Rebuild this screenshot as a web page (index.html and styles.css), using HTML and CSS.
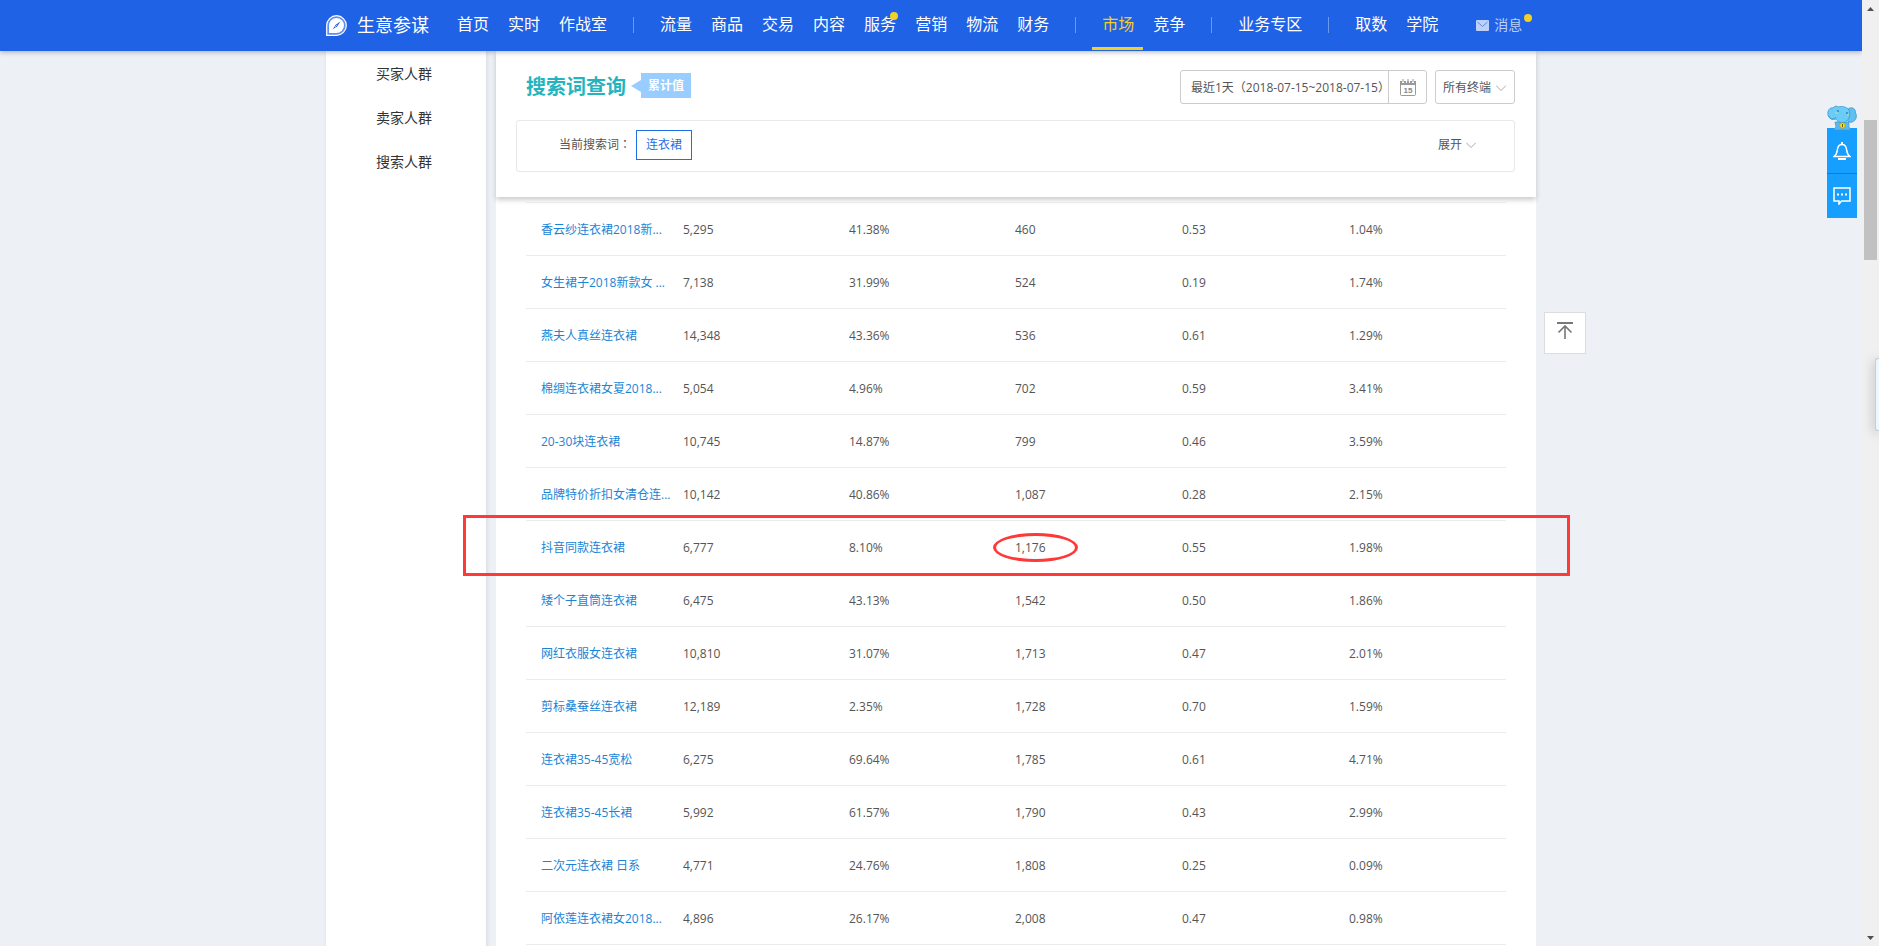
FILE: index.html
```html
<!DOCTYPE html>
<html lang="zh-CN">
<head>
<meta charset="utf-8">
<title>生意参谋 - 搜索词查询</title>
<link rel="stylesheet" href="styles.css">
</head>
<body>
<div class="viewport">
  <header class="topbar">
    <div class="container topbar-inner">
      <a class="brand" href="#">
        <svg class="brand-logo" viewBox="0 0 21 21" aria-hidden="true">
          <path d="M.700 20.300V10.500A9.800 9.800 0 1 1 10.500 20.300Z" fill="#5f8fee" stroke="#fff" stroke-width="1.200"/>
          <path d="M3 18V10.500a7.500 7.500 0 1 1 7.500 7.500Z" fill="#fff"/>
          <path d="M14.500 6.500L11.300 11.300L6.500 14.500L9.700 9.700Z" fill="#2062e6"/>
          <path d="M11 10L9 12" stroke="#fff" stroke-width=".6"/>
        </svg>
        <span>生意参谋</span>
      </a>
      <nav class="nav">
        <a href="#">首页</a><a href="#">实时</a><a href="#">作战室</a>
        <i class="sep"></i>
        <a href="#">流量</a><a href="#">商品</a><a href="#">交易</a><a href="#">内容</a><a href="#">服务<b class="dot"></b></a><a href="#">营销</a><a href="#">物流</a><a href="#">财务</a>
        <i class="sep"></i>
        <a class="active" href="#">市场</a><a href="#">竞争</a>
        <i class="sep"></i>
        <a href="#">业务专区</a>
        <i class="sep"></i>
        <a href="#">取数</a><a href="#">学院</a>
      </nav>
      <a class="message" href="#">
        <svg viewBox="0 0 13 11" aria-hidden="true"><rect width="13" height="11" rx="1" fill="#bcd0f8"/><path d="M1.500 2L6.500 6.500L11.500 2" fill="none" stroke="#5a8bee"/></svg>
        消息<b class="dot"></b>
      </a>
    </div>
  </header>

  <div class="container body">
    <aside class="sidebar">
      <a href="#">买家人群</a>
      <a href="#">卖家人群</a>
      <a href="#">搜索人群</a>
    </aside>

    <main class="main">
      <section class="panel">
        <div class="panel-head">
          <h1>搜索词查询</h1>
          <span class="badge">累计值</span>
          <div class="filters">
            <div class="date">
              <input type="text" readonly aria-label="日期范围" lang="zh-TW" value="最近1天（2018-07-15~2018-07-15）">
              <button type="button" aria-label="选择日期">
                <svg viewBox="0 0 16 17" aria-hidden="true">
                  <path d="M.500 4V15.500Q.500 16.500 1.500 16.500H14.500Q15.500 16.500 15.500 15.500V4" fill="none" stroke="#999"/>
                  <path d="M0 2H2V4H4V2H6V4H7V2H9V4H10V2H12V4H14V2H16V6H0Z" fill="#999"/>
                  <path d="M3 0V3M8 0V3M13 0V3" stroke="#999"/>
                  <text x="8" y="14" text-anchor="middle" class="cal-day">15</text>
                </svg>
              </button>
            </div>
            <div class="terminal">
              <select aria-label="终端"><option>所有终端</option></select>
              <svg class="chevron" viewBox="0 0 10 6" aria-hidden="true"><path d="M0 .500L5 5.500L10 .500"/></svg>
            </div>
          </div>
        </div>
        <div class="query">
          <span>当前搜索词<span class="colon" lang="zh-TW">：</span></span>
          <button type="button" class="term">连衣裙</button>
          <button type="button" class="expand">展开 <svg class="chevron" viewBox="0 0 10 6" aria-hidden="true"><path d="M0 .500L5 5.500L10 .500"/></svg></button>
        </div>
      </section>

      <table class="words">
        <colgroup><col class="c-name"><col class="c-pop"><col class="c-pop"><col class="c-num"><col class="c-num"><col></colgroup>
        <tbody>
          <tr><td><a href="#">香云纱连衣裙2018新...</a></td><td>5,295</td><td>41.38%</td><td>460</td><td>0.53</td><td>1.04%</td></tr>
          <tr><td><a href="#">女生裙子2018新款女 ...</a></td><td>7,138</td><td>31.99%</td><td>524</td><td>0.19</td><td>1.74%</td></tr>
          <tr><td><a href="#">燕夫人真丝连衣裙</a></td><td>14,348</td><td>43.36%</td><td>536</td><td>0.61</td><td>1.29%</td></tr>
          <tr><td><a href="#">棉绸连衣裙女夏2018...</a></td><td>5,054</td><td>4.96%</td><td>702</td><td>0.59</td><td>3.41%</td></tr>
          <tr><td><a href="#">20-30块连衣裙</a></td><td>10,745</td><td>14.87%</td><td>799</td><td>0.46</td><td>3.59%</td></tr>
          <tr><td><a href="#">品牌特价折扣女清仓连...</a></td><td>10,142</td><td>40.86%</td><td>1,087</td><td>0.28</td><td>2.15%</td></tr>
          <tr class="marked"><td><a href="#">抖音同款连衣裙</a></td><td>6,777</td><td>8.10%</td><td><span class="circled">1,176</span></td><td>0.55</td><td>1.98%</td></tr>
          <tr><td><a href="#">矮个子直筒连衣裙</a></td><td>6,475</td><td>43.13%</td><td>1,542</td><td>0.50</td><td>1.86%</td></tr>
          <tr><td><a href="#">网红衣服女连衣裙</a></td><td>10,810</td><td>31.07%</td><td>1,713</td><td>0.47</td><td>2.01%</td></tr>
          <tr><td><a href="#">剪标桑蚕丝连衣裙</a></td><td>12,189</td><td>2.35%</td><td>1,728</td><td>0.70</td><td>1.59%</td></tr>
          <tr><td><a href="#">连衣裙35-45宽松</a></td><td>6,275</td><td>69.64%</td><td>1,785</td><td>0.61</td><td>4.71%</td></tr>
          <tr><td><a href="#">连衣裙35-45长裙</a></td><td>5,992</td><td>61.57%</td><td>1,790</td><td>0.43</td><td>2.99%</td></tr>
          <tr><td><a href="#">二次元连衣裙 日系</a></td><td>4,771</td><td>24.76%</td><td>1,808</td><td>0.25</td><td>0.09%</td></tr>
          <tr><td><a href="#">阿依莲连衣裙女2018...</a></td><td>4,896</td><td>26.17%</td><td>2,008</td><td>0.47</td><td>0.98%</td></tr>
        </tbody>
      </table>

      <button type="button" class="to-top" aria-label="返回顶部">
        <svg viewBox="0 0 16 17" aria-hidden="true"><path d="M0 1H16" stroke-width="2"/><path d="M8 17V4M1.500 10.500L8 4L14.500 10.500" stroke-width="1.600"/></svg>
      </button>
    </main>
  </div>

  <div class="helper">
    <svg class="elephant" viewBox="0 0 30 26" aria-hidden="true">
      <path d="M8 17H22V22L24 25H6L9 22Z" fill="#5bb8ec" stroke="#3a97cd" stroke-width=".7"/>
      <path d="M21 4C25 1 29 4 28.500 8C30.500 11 29 16 25 17C22 18 20 16 20 13Z" fill="#5fc0f2" stroke="#3a97cd" stroke-width=".8"/>
      <path d="M6 3C8 .500 10 .800 11 2C15 .800 20 2 22 5C24 10 22 16 17 17.500C12 18 10 15.500 9 14C6 15 2 14 1 10C0 6 3 2 6 3Z" fill="#6bcbf9" stroke="#3a97cd" stroke-width=".8"/>
      <path d="M2 11C3 15 7 15 9 12" fill="none" stroke="#3a97cd"/>
      <path d="M11 5V7M20 7V9" stroke="#245f8d"/>
      <path d="M8 8H11M20 10H22" stroke="#d7dd62"/>
      <circle cx="15.500" cy="20.500" r="2.800" fill="#f5d929" stroke="#a79a22" stroke-width=".7"/>
      <path d="M15.500 19V22" stroke="#665c10"/>
    </svg>
    <button type="button" aria-label="提醒">
      <svg viewBox="0 0 18 18" aria-hidden="true"><path d="M1 14.500C4 12.500 4 10 4.500 7C5 4 6.500 2.500 9 2.500S13 4 13.500 7C14 10 14 12.500 17 14.500Z" fill="none" stroke="#fff" stroke-width="1.500"/><path d="M9 0V3M5 17H13" stroke="#fff" stroke-width="2"/></svg>
    </button>
    <button type="button" aria-label="消息">
      <svg viewBox="0 0 18 18" aria-hidden="true"><path d="M1 1H17V14H8.500L6 17V14H1Z" fill="none" stroke="#fff" stroke-width="1.500"/><path d="M4 7.500H6M8 7.500H10M12 7.500H14" stroke="#fff" stroke-width="2"/></svg>
    </button>
  </div>
</div>

<div class="scrollbar" aria-hidden="true">
  <svg class="arrow" viewBox="0 0 7 4"><path d="M0 4L3.500 0L7 4Z"/></svg>
  <div class="thumb"></div>
  <svg class="arrow" viewBox="0 0 7 4"><path d="M0 0L3.500 4L7 0Z"/></svg>
</div>
<div class="edge-tab"></div>
</body>
</html>
```

FILE: styles.css
```css
* { box-sizing: border-box; }

body {
  margin: 0;
  display: flex;
  height: 100vh;
  overflow: hidden;
  background: #edf1f6;
  color: #555;
  font: 12px/18px "Open Sans", "Noto Sans CJK SC", sans-serif;
}

a { color: inherit; text-decoration: none; }
button, input, select { margin: 0; padding: 0; border: 0; background: none; color: inherit; font: inherit; }

.viewport { flex: 1; min-width: 0; position: relative; overflow: hidden; }
.container { width: 100%; max-width: 1210px; margin: 0 auto; }

/* Top bar */
.topbar {
  position: relative;
  z-index: 3;
  background: #2062e6;
  color: #fff;
  box-shadow: 0 1px 5px rgba(0, 0, 0, .3);
}
.topbar-inner { display: flex; align-items: center; height: 51px; padding-bottom: 1px; white-space: nowrap; }
.brand { display: flex; align-items: center; gap: 10px; margin-right: 18px; font-size: 18px; line-height: 24px; }
.brand-logo { width: 21px; height: 21px; }
.nav { display: flex; align-items: center; font-size: 16px; line-height: 48px; }
.nav a { position: relative; height: 50px; padding: 0 9px 0 10px; }
.nav .active { color: #f3d022; border-bottom: 3px solid #f3d022; }
.sep { width: 1px; height: 16px; margin: 0 16px 0 17px; background: rgba(255, 255, 255, .35); }
.dot { position: absolute; width: 8px; height: 8px; border-radius: 50%; background: #f3d022; }
.nav .dot { top: 12px; right: 7px; }
.message { position: relative; display: flex; align-items: center; gap: 5px; margin-left: 29px; color: #bcd0f8; font-size: 14px; }
.message svg { width: 13px; height: 11px; }
.message .dot { top: -2px; right: -5px; }

/* Columns */
.body { display: flex; gap: 10px; align-items: stretch; }
.sidebar {
  flex: 0 0 160px;
  min-height: 100vh;
  padding-top: 1px;
  background: #fff;
  box-shadow: 1px 0 4px rgba(0, 0, 0, .1);
  color: #333;
  font-size: 14px;
}
.sidebar a { display: block; padding-left: 50px; line-height: 44px; }
.main { position: relative; flex: 1; min-width: 0; min-height: 100vh; background: #fff; }

/* Query panel */
.panel { padding: 19px 21px 25px 20px; box-shadow: 0 3px 5px rgba(0, 0, 0, .2); }
.panel-head { display: flex; align-items: center; padding-left: 10px; }
.panel-head h1 { margin: 0; color: #23b5bf; font-size: 20px; line-height: 34px; }
.badge { position: relative; margin: 0 0 3px 15px; padding: 0 7px; background: #9cf; color: #fff; font-weight: bold; line-height: 25px; }
.badge::before {
  content: "";
  position: absolute;
  top: 7px;
  left: -10px;
  border: solid transparent;
  border-width: 6px 10px 6px 0;
  border-right-color: #9cf;
}
.filters { display: flex; gap: 8px; margin-left: auto; }
.date, .terminal { display: flex; height: 34px; border: 1px solid #ccc; border-radius: 3px; }
.date input { width: 207px; padding: 1px 0 0 10px; font-family: "Open Sans", "Noto Sans CJK TC", sans-serif; }
.date button { display: flex; align-items: center; justify-content: center; width: 38px; border-left: 1px solid #ccc; }
.date svg { width: 16px; height: 17px; }
.cal-day { fill: #888; font: bold 8px "Liberation Sans", sans-serif; }
.terminal { position: relative; width: 80px; }
.terminal select { width: 100%; padding: 1px 0 0 7px; appearance: none; }
.terminal .chevron { position: absolute; top: 14px; right: 8px; pointer-events: none; }
.chevron { width: 10px; height: 6px; fill: none; stroke: #aaa; }

.query {
  display: flex;
  align-items: center;
  height: 52px;
  margin-top: 16px;
  padding: 0 38px 3px 42px;
  border: 1px solid #e8e8e8;
  border-radius: 3px;
}
.colon { font-family: "Noto Sans CJK TC", sans-serif; line-height: 1; }
.term { height: 30px; margin-left: 5px; padding: 0 9px; border: 1px solid #1f6fe5; color: #1f6fe5; }
.expand { display: flex; align-items: center; gap: 4px; margin-left: auto; }

/* Search words */
.words {
  width: calc(100% - 60px);
  margin: 5px 30px 0;
  border-top: 1px solid #ebebeb;
  border-spacing: 0;
  table-layout: fixed;
}
.c-name { width: 157px; }
.c-pop { width: 166px; }
.c-num { width: 167px; }
.words td { height: 53px; padding: 1px 0 0; border-bottom: 1px solid #ebebeb; white-space: nowrap; }
.words td:first-child { padding-left: 15px; color: #1a84d6; }

.marked { position: relative; }
.marked td:last-child::after { content: ""; position: absolute; inset: -6px -64px -2px -63px; border: 3px solid #ff3838; z-index: 2; pointer-events: none; }
.circled { position: relative; }
.circled::after { content: ""; position: absolute; inset: -6px -32px -6px -22px; border: 3px solid #ff3838; border-radius: 50%; }

/* Floating controls */
.to-top {
  position: absolute;
  top: 261px;
  left: calc(100% + 8px);
  width: 42px;
  height: 42px;
  border: 1px solid #ddd;
  background: #fff;
}
.to-top svg { width: 16px; height: 17px; fill: none; stroke: #777; }
.helper { position: absolute; top: 105px; right: 5px; width: 30px; }
.elephant { position: relative; z-index: 1; display: block; width: 30px; height: 26px; margin-bottom: -3px; }
.helper button { display: flex; align-items: center; justify-content: center; width: 30px; height: 45px; background: #169fff; }
.helper button + button { border-top: 1px solid #0b80d3; }
.helper button svg { width: 18px; height: 18px; }

.scrollbar { display: flex; flex-direction: column; align-items: center; width: 17px; padding: 7px 0 6px; background: #f0f0f0; }
.arrow { flex: none; width: 7px; height: 4px; fill: #505050; }
.thumb { width: 13px; height: 140px; margin: 109px 0 auto; background: #c1c1c1; }
.edge-tab {
  position: absolute;
  top: 358px;
  right: 0;
  width: 4px;
  height: 73px;
  border: 1px solid #ccc;
  border-right: 0;
  border-radius: 3px 0 0 3px;
  background: #ecf7ff;
  box-shadow: 0 2px 12px rgba(0, 0, 0, .35);
}
```
